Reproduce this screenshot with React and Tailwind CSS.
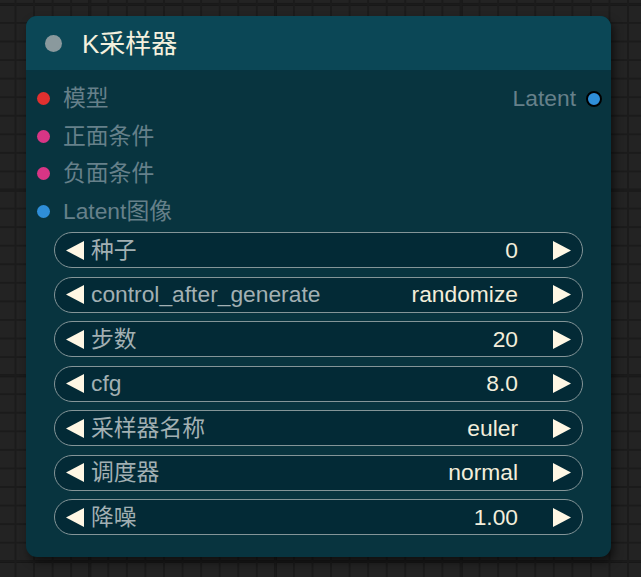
import React from "react";

const inputs = [
  { label: "模型", color: "bg-[#e0302f]" },
  { label: "正面条件", color: "bg-[#d83585]" },
  { label: "负面条件", color: "bg-[#d83585]" },
  { label: "Latent图像", color: "bg-[#2f8ed8]" },
];

const widgets = [
  { label: "种子", value: "0" },
  { label: "control_after_generate", value: "randomize" },
  { label: "步数", value: "20" },
  { label: "cfg", value: "8.0" },
  { label: "采样器名称", value: "euler" },
  { label: "调度器", value: "normal" },
  { label: "降噪", value: "1.00" },
];

const font = "font-['Liberation_Sans','Noto_Sans_CJK_SC',sans-serif]";

function Left() {
  return (
    <svg width="18" height="19" viewBox="0 0 18 19" className="shrink-0">
      <polygon points="18,0 18,19 0,9.5" fill="#fff7e4" />
    </svg>
  );
}
function Right() {
  return (
    <svg width="18" height="19" viewBox="0 0 18 19" className="shrink-0">
      <polygon points="0,0 0,19 18,9.5" fill="#fff7e4" />
    </svg>
  );
}

export default function App() {
  return (
    <div
      className={`relative w-[641px] h-[577px] overflow-hidden bg-[#232323] bg-[image:linear-gradient(to_right,#1b1b1b_2px,transparent_2px),linear-gradient(to_bottom,#1b1b1b_2px,transparent_2px),linear-gradient(to_right,#161616_3px,transparent_3px),linear-gradient(to_bottom,#161616_3px,transparent_3px)] bg-[size:18.57px_18.57px,18.57px_18.57px,185.7px_185.7px,185.7px_185.7px] bg-[position:14.5px_3.4px,14.5px_3.4px,88.3px_188.6px,88.3px_188.6px] ${font}`}
    >
      <div className="absolute left-[26px] top-[16px] w-[585px] h-[541px] rounded-[11px] bg-[#08343f] shadow-[3px_5px_8px_rgba(0,0,0,0.55)] overflow-hidden flex flex-col">
        {/* Title */}
        <div className="h-[56px] shrink-0 bg-[#0b4756] border-b-2 border-[#073440] flex items-center pl-[19px]">
          <div className="w-[17px] h-[17px] rounded-full bg-[#8a999d]" />
          <div className="ml-[20px] text-[26px] leading-none text-[#f5f1de] pt-[1px]">K采样器</div>
        </div>
        {/* Slots */}
        <div className="pt-[8px] flex flex-col">
          {inputs.map((s, i) => (
            <div key={i} className="h-[37.5px] flex items-center pl-[11px] pr-[9px]">
              <div className={`w-[13px] h-[13px] rounded-full ${s.color}`} />
              <div className="ml-[13px] text-[22.8px] leading-none text-[#66808a]">{s.label}</div>
              {i === 0 && (
                <div className="ml-auto flex items-center">
                  <div className="text-[22.8px] leading-none text-[#66808a]">Latent</div>
                  <div className="ml-[10px] w-[16px] h-[16px] rounded-full bg-[#2f8ed8] border-2 border-black" />
                </div>
              )}
            </div>
          ))}
        </div>
        {/* Widgets */}
        <div className="mt-[2px] px-[28px] flex flex-col gap-[8.5px]">
          {widgets.map((w, i) => (
            <div
              key={i}
              className="h-[36px] rounded-full border-[1.5px] border-[#849598] bg-[#032a36] flex items-center pl-[11px] pr-[11px]"
            >
              <Left />
              <div className="ml-[7px] text-[22.8px] leading-none text-[#a2b0b3]">{w.label}</div>
              <div className="ml-auto text-[22.8px] leading-none text-[#f3eedb]">{w.value}</div>
              <div className="ml-[35px]">
                <Right />
              </div>
            </div>
          ))}
        </div>
      </div>
    </div>
  );
}
